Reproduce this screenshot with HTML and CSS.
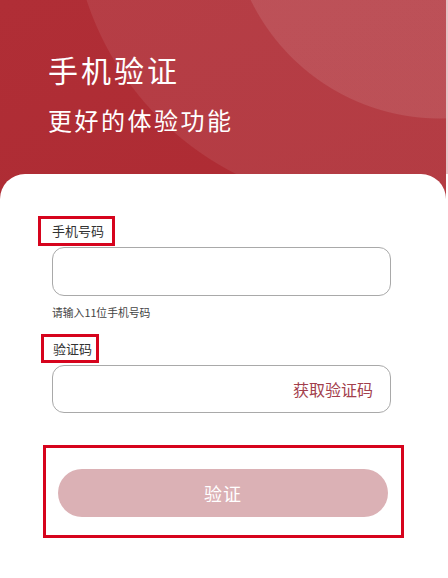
FILE: index.html
```html
<!DOCTYPE html>
<html lang="zh-CN">
<head>
<meta charset="utf-8">
<title>手机验证</title>
<link rel="stylesheet" href="styles.css">
</head>
<body>
<div class="page">
  <header class="hero">
    <h1 class="hero-title">手机验证</h1>
    <p class="hero-sub">更好的体验功能</p>
  </header>
  <main class="card">
    <div class="label-box label-phone">手机号码</div>
    <div class="field field-phone"><input class="field-input" type="text"></div>
    <div class="hint">请输入11位手机号码</div>
    <div class="label-box label-code">验证码</div>
    <div class="field field-code">
      <input class="field-input" type="text">
      <span class="get-code">获取验证码</span>
    </div>
    <div class="btn-box">
      <button class="btn-verify" type="button">验证</button>
    </div>
  </main>
</div>
</body>
</html>
```

FILE: styles.css
```css
html, body {
  margin: 0;
  padding: 0;
}
body {
  width: 448px;
  height: 578px;
  overflow: hidden;
  background: linear-gradient(#e6c2c5 0 174px, #ffffff 174px);
  font-family: "Noto Sans CJK SC", "Noto Sans", sans-serif;
}
.page {
  width: 446px;
  min-height: 578px;
  display: flex;
  flex-direction: column;
  background:
    radial-gradient(circle at 440px -92px, rgba(255,255,255,0.10) 210px, rgba(255,255,255,0) 211px),
    radial-gradient(circle at 372px -94px, rgba(255,255,255,0.08) 300px, rgba(255,255,255,0) 301px),
    linear-gradient(160deg, #b02e36 0%, #ab2830 100%);
}
.hero {
  height: 174px;
  padding-left: 48px;
  box-sizing: border-box;
  color: #ffffff;
}
.hero-title {
  margin: 49px 0 0 0;
  font-size: 30px;
  line-height: 40px;
  font-weight: 400;
  letter-spacing: 3px;
}
.hero-sub {
  margin: 15px 0 0 0;
  font-size: 24px;
  line-height: 32px;
  font-weight: 400;
  letter-spacing: 2.5px;
}
.card {
  flex: 1;
  background: #ffffff;
  border-radius: 25px 25px 0 0;
  display: flex;
  flex-direction: column;
  align-items: flex-start;
}
.label-box {
  border: 3px solid #d6041d;
  font-size: 13px;
  color: #333333;
  box-sizing: border-box;
}
.label-phone {
  margin: 42px 0 0 38px;
  width: 77px;
  height: 30px;
  line-height: 24px;
  padding-left: 11px;
}
.label-code {
  margin: 15px 0 0 41px;
  width: 58px;
  height: 29px;
  line-height: 23px;
  padding-left: 9px;
}
.field {
  width: 339px;
  border: 1px solid #a9a9a9;
  border-radius: 12px;
  box-sizing: border-box;
  margin-left: 52px;
  display: flex;
  align-items: center;
  background: #ffffff;
}
.field-phone {
  margin-top: 1px;
  height: 49px;
}
.field-code {
  margin-top: 2px;
  height: 48px;
}
.field-input {
  flex: 1;
  min-width: 0;
  border: none;
  outline: none;
  background: transparent;
  font-family: inherit;
  font-size: 15px;
  padding: 0 12px;
}
.get-code {
  color: #a3404c;
  font-size: 16px;
  padding-right: 17px;
  white-space: nowrap;
}
.hint {
  margin: 9px 0 0 52px;
  font-size: 10.8px;
  line-height: 14px;
  color: #444444;
}
.btn-box {
  margin: 32px 0 0 43px;
  width: 361px;
  height: 93px;
  border: 3px solid #d6041d;
  box-sizing: border-box;
  padding: 21px 13px 0 12px;
}
.btn-verify {
  display: block;
  width: 330px;
  height: 48px;
  border: none;
  border-radius: 24px;
  background: #dbb1b5;
  color: #ffffff;
  font-family: inherit;
  font-size: 18px;
  letter-spacing: 1px;
  padding: 0;
}
```
